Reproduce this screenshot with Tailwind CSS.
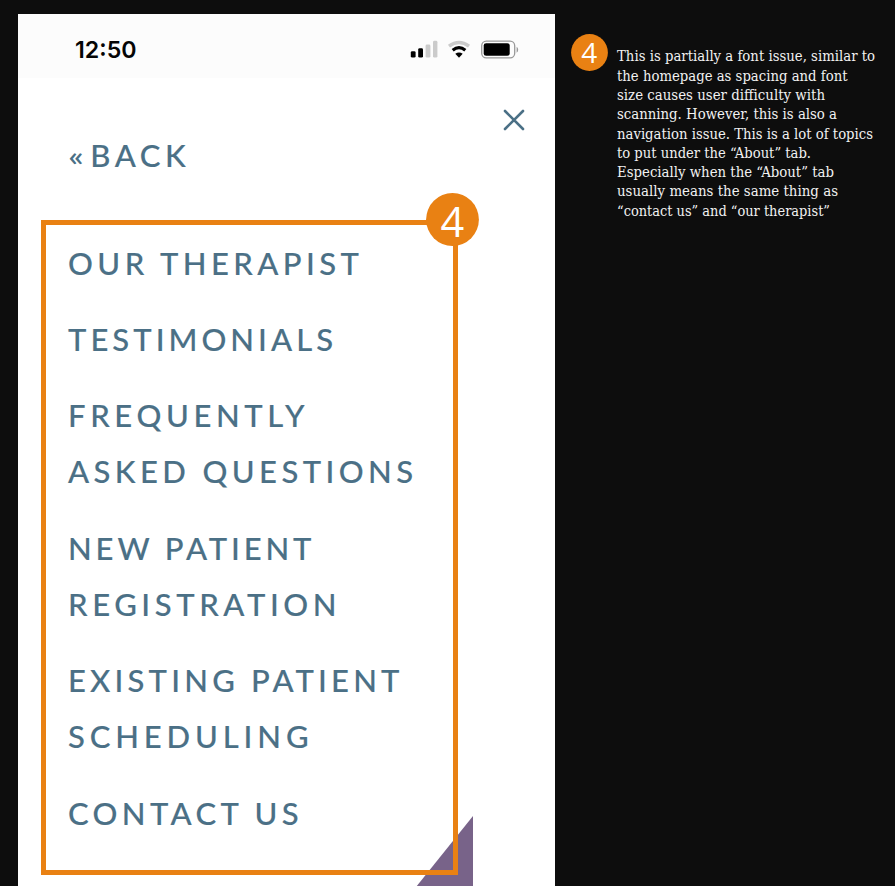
<!DOCTYPE html>
<html lang="en"><head><meta charset="utf-8"><title>Navigation review</title>
<script src="https://cdn.jsdelivr.net/npm/@tailwindcss/browser@4"></script></head>
<body class="bg-[#0d0d0d]">
<main class="relative flex h-[886px] w-[895px] overflow-hidden bg-[#0d0d0d] pl-[18.3px] pt-[14.3px]">
  <section class="relative w-[537.2px] shrink-0 bg-white">
    <header class="flex h-16 items-start justify-between bg-[#fcfcfc] pl-[56.7px] pr-[37.4px] pt-[24px]">
      <svg class="h-6 w-[64px] overflow-visible font-['Inter'] font-semibold" fill="#050505"><text x="0" y="19.7" font-size="23.5" textLength="61.5" lengthAdjust="spacingAndGlyphs">12:50</text></svg>
      <svg class="h-6 w-[109px] overflow-visible" viewBox="0 0 109 24">
        <rect x="1.8" y="13.2" width="4.8" height="6.4" rx="1.4"/><rect x="9.2" y="10.2" width="4.8" height="9.4" rx="1.4"/>
        <g fill="#cbcbcb"><rect x="16.6" y="6.6" width="4.8" height="13" rx="1.4"/><rect x="24" y="2.8" width="4.4" height="16.8" rx="1.4"/></g>
        <path d="M40 8.2Q50 .7 60 8.2" fill="none" stroke="#cbcbcb" stroke-width="3.4"/>
        <path d="M43.7 12.3Q50 7 56.3 12.3" fill="none" stroke="#000" stroke-width="3.2"/>
        <path d="M46.3 15.8Q50 13 53.7 15.8L50 19.7Z"/>
        <rect x="72.7" y="3.2" width="33" height="16.6" rx="4.6" fill="none" stroke="#999" stroke-width="1.3"/><rect x="74.7" y="5.2" width="26" height="12.6" rx="2.4"/>
        <path d="M107.6 8.7q1.6 1.2 1.6 3t-1.6 3Z" fill="#999"/>
      </svg>
    </header>
    <button aria-label="Close" class="absolute left-[485px] top-[95px]"><svg class="size-[22px]" viewBox="0 0 22 22" fill="none" stroke="#4b7086" stroke-width="2.6" stroke-linecap="round"><path d="M2 2L20 20M20 2L2 20"/></svg></button>
    <div class="pl-[50px] pt-[61.9px]">
      <svg class="h-8 w-[140px] overflow-visible font-['Lato'] font-medium" fill="#4b7086"><text x="0" y="26.3" font-size="27" textLength="16" lengthAdjust="spacingAndGlyphs">«</text><text x="22.3" y="27" font-size="31" textLength="95.5" stroke="#4b7086" stroke-width="0.15">BACK</text></svg>
    </div>
    <svg class="absolute left-[398px] top-[801px] h-[71px] w-[57px]" viewBox="0 0 57 71"><path d="M0 72L57 1V72Z" fill="#786389"/></svg>
    <nav class="absolute left-[22.7px] top-[205.7px] h-[655px] w-[417.3px] border-[5px] border-solid border-[#e98113]">
      <ul class="flex flex-col gap-[19.7px] pl-[22.5px] pt-[15px] font-['Lato'] font-medium">
        <li class="h-[56.4px]"><svg class="h-full w-[350px] overflow-visible" fill="#4b7086" stroke="#4b7086" stroke-width="0.15"><text x="0" y="35.3" font-size="31" textLength="291">OUR THERAPIST</text></svg></li>
        <li class="h-[56.4px]"><svg class="h-full w-[350px] overflow-visible" fill="#4b7086" stroke="#4b7086" stroke-width="0.15"><text x="0" y="35.1" font-size="31" textLength="265">TESTIMONIALS</text></svg></li>
        <li class="h-[112.8px]"><svg class="h-full w-[350px] overflow-visible" fill="#4b7086" stroke="#4b7086" stroke-width="0.15"><text x="0" y="35" font-size="31" textLength="236.5">FREQUENTLY</text><text x="0" y="91.4" font-size="31" textLength="345">ASKED QUESTIONS</text></svg></li>
        <li class="h-[112.8px]"><svg class="h-full w-[350px] overflow-visible" fill="#4b7086" stroke="#4b7086" stroke-width="0.15"><text x="0" y="35" font-size="31" textLength="243.5">NEW PATIENT</text><text x="0" y="91.4" font-size="31" textLength="268.5">REGISTRATION</text></svg></li>
        <li class="h-[112.8px]"><svg class="h-full w-[350px] overflow-visible" fill="#4b7086" stroke="#4b7086" stroke-width="0.15"><text x="0" y="35" font-size="31" textLength="331.5">EXISTING PATIENT</text><text x="0" y="91.4" font-size="31" textLength="240.5">SCHEDULING</text></svg></li>
        <li class="h-[56.4px]"><svg class="h-full w-[350px] overflow-visible" fill="#4b7086" stroke="#4b7086" stroke-width="0.15"><text x="0" y="35" font-size="31" textLength="230.5">CONTACT US</text></svg></li>
      </ul>
    </nav>
    <svg class="absolute left-[408.2px] top-[178.7px] size-[53px] overflow-visible font-['Open_Sans']" viewBox="0 0 53 53"><circle cx="26.5" cy="26.5" r="26.4" fill="#e98113"/><text x="26.3" y="44" font-size="41.5" text-anchor="middle" fill="#fff">4</text></svg>
  </section>
  <aside class="flex pl-[15.3px] pt-[19.5px]">
    <svg class="size-[37px] shrink-0 font-['Open_Sans']" viewBox="0 0 37 37"><circle cx="18.5" cy="18.5" r="18.4" fill="#e98113"/><text x="18.2" y="29" font-size="28" text-anchor="middle" fill="#fff">4</text></svg>
    <p class="ml-[9.7px] mt-[12.4px]"><svg class="h-[180px] w-[262px] overflow-visible [font-family:'DejaVu_Serif_Condensed','DejaVu_Serif',serif]" fill="#f2f2f2" font-size="15.2">
      <text x="0" y="15.3" textLength="258" lengthAdjust="spacingAndGlyphs">This is partially a font issue, similar to</text>
      <text x="0" y="34.6" textLength="230.5" lengthAdjust="spacingAndGlyphs">the homepage as spacing and font</text>
      <text x="0" y="53.9" textLength="208" lengthAdjust="spacingAndGlyphs">size causes user difficulty with</text>
      <text x="0" y="73.2" textLength="220" lengthAdjust="spacingAndGlyphs">scanning. However, this is also a</text>
      <text x="0" y="92.5" textLength="256" lengthAdjust="spacingAndGlyphs">navigation issue. This is a lot of topics</text>
      <text x="0" y="111.8" textLength="194" lengthAdjust="spacingAndGlyphs">to put under the “About” tab.</text>
      <text x="0" y="131.1" textLength="217" lengthAdjust="spacingAndGlyphs">Especially when the “About” tab</text>
      <text x="0" y="150.4" textLength="221" lengthAdjust="spacingAndGlyphs">usually means the same thing as</text>
      <text x="0" y="169.7" textLength="213" lengthAdjust="spacingAndGlyphs">“contact us” and “our therapist”</text>
    </svg></p>
  </aside>
</main>
</body></html>
